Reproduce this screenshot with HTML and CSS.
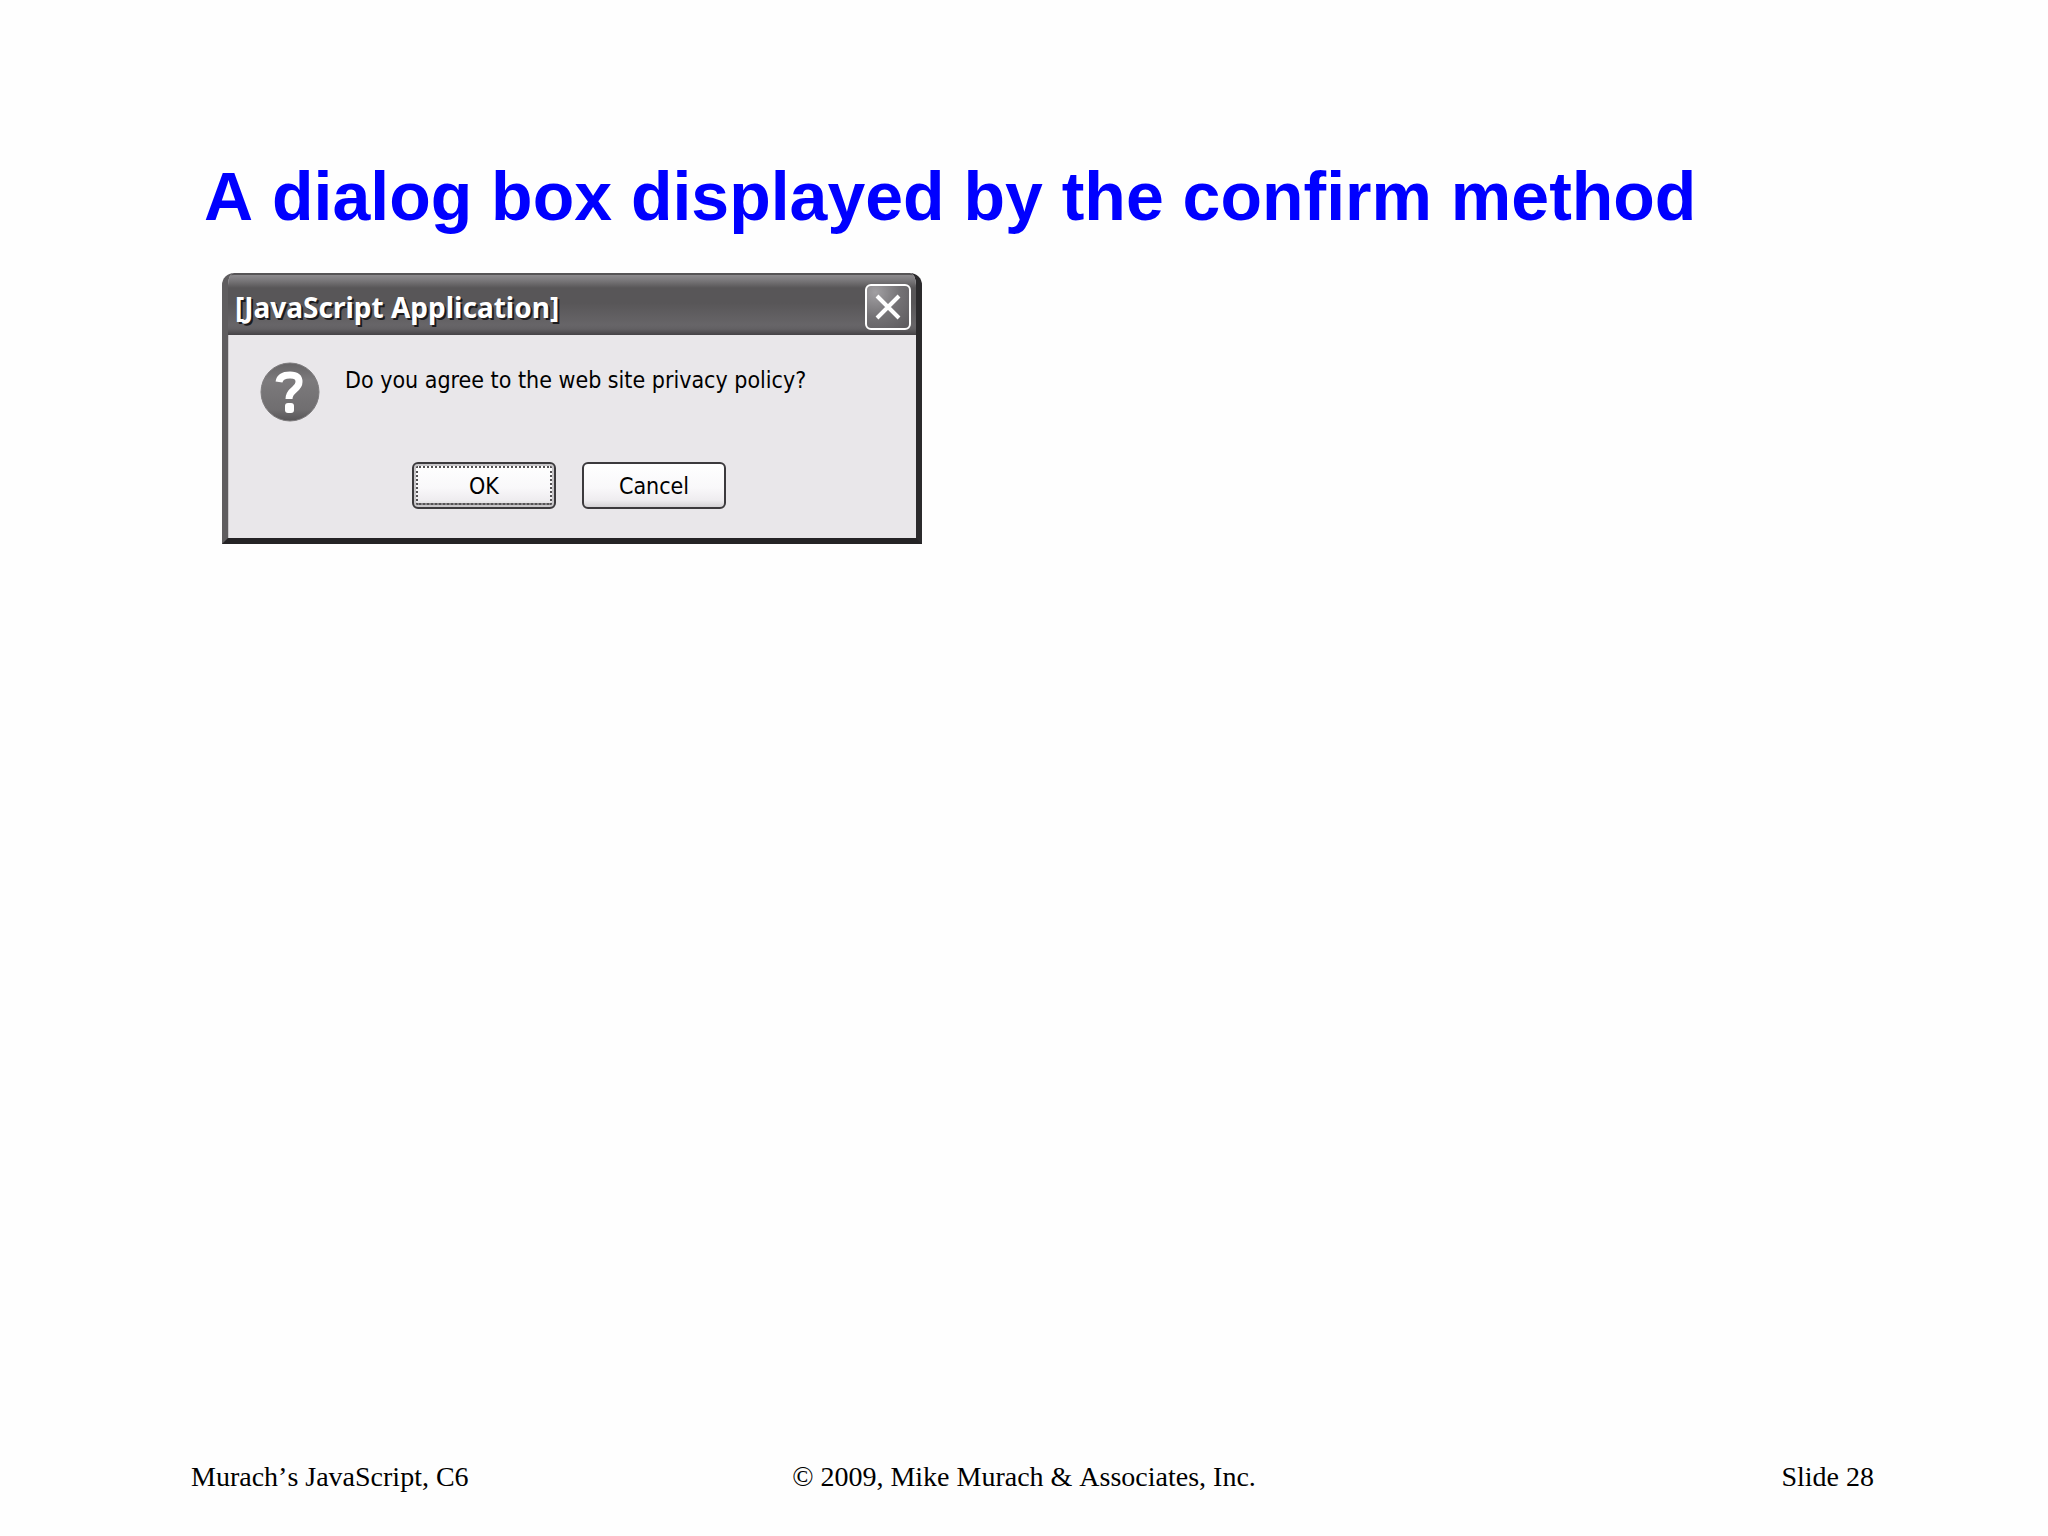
FILE: index.html
```html
<!DOCTYPE html>
<html lang="en">
<head>
<meta charset="utf-8">
<title>A dialog box displayed by the confirm method</title>
<link rel="stylesheet" href="styles.css">
</head>
<body>
<div class="slide">
  <main class="content">
    <h1 class="heading">A dialog box displayed by the confirm method</h1>
    <section class="dialog" role="dialog" aria-labelledby="dialog-title" aria-describedby="dialog-message">
      <header class="titlebar">
        <h2 class="dialog-title" id="dialog-title">[JavaScript Application]</h2>
        <button class="close" type="button" aria-label="Close">
          <svg class="close-icon" viewBox="0 0 26 26" aria-hidden="true"><path d="M2 2 24 24M24 2 2 24" fill="none" stroke="#fff" stroke-width="4"/></svg>
        </button>
      </header>
      <div class="dialog-body">
        <div class="prompt">
          <svg class="question" viewBox="0 0 60 60" aria-hidden="true">
            <defs>
              <linearGradient id="disc" x1="0" y1="0" x2="0" y2="1">
                <stop offset="0" stop-color="#666466"/>
                <stop offset=".3" stop-color="#7c7a7c"/>
                <stop offset=".8" stop-color="#706e70"/>
                <stop offset="1" stop-color="#575557"/>
              </linearGradient>
            </defs>
            <circle cx="30" cy="30" r="29" fill="url(#disc)" stroke="#7d7b7d" stroke-width="1"/>
            <path d="M19 20C20 14 25 13 30 13C37 13 39 16 39 20C39 28 29 27 29 37" fill="none" stroke="#fff" stroke-width="7"/>
            <rect x="25" y="41" width="9" height="10" rx="3" fill="#fff"/>
          </svg>
          <p class="message" id="dialog-message">Do you agree to the web site privacy policy?</p>
        </div>
        <div class="actions">
          <button class="btn btn-default" type="button">OK</button>
          <button class="btn" type="button">Cancel</button>
        </div>
      </div>
    </section>
  </main>
  <footer class="footer">
    <span class="footer-book">Murach’s JavaScript, C6</span>
    <span>© 2009, Mike Murach &amp; Associates, Inc.</span>
    <span class="footer-page">Slide 28</span>
  </footer>
</div>
</body>
</html>
```
FILE: styles.css
```css
* {
  box-sizing: border-box;
}

body {
  margin: 0;
  background: #fefefe;
  color: #000;
}

.slide {
  display: flex;
  flex-direction: column;
  min-height: 100vh;
}

.content {
  flex: 1;
  padding: 156px 204px 0;
}

.heading {
  margin: 0;
  font: bold 68px/80px "Liberation Sans", Arial, sans-serif;
  font-kerning: none;
  color: #00f;
}

.dialog {
  max-width: 700px;
  margin: 37px 0 0 18px;
  border: solid;
  border-width: 0 6px 6px;
  border-color: #555355 #2b2a2c #242325 #5f5d5f;
  border-radius: 12px 12px 0 0;
  background: #e9e7ea;
  overflow: hidden;
  box-shadow: inset 1px 0 #c9c7ca;
}

.titlebar {
  display: flex;
  align-items: center;
  justify-content: space-between;
  height: 62px;
  margin: 0 -6px;
  padding: 3px 11px 0 13px;
  border-top: 2px solid #565456;
  border-radius: 12px 12px 0 0;
  background: linear-gradient(#8d8b8e 0, #7b797c 5px, #585658 13px, #585658 28px, #676568 50px, #626063 54px, #454346 60px);
}

.dialog-title {
  margin: 0;
  font: bold 28px/32px "Noto Sans", "Open Sans", sans-serif;
  font-kerning: none;
  color: #fff;
  text-shadow: 2px 2px #1c1b1d;
}

.close {
  display: grid;
  place-items: center;
  width: 46px;
  height: 46px;
  padding: 0;
  border: 2px solid #fff;
  border-radius: 6px;
  background: radial-gradient(circle at 20% 15%, #a19fa2, #747275 50%, #5c5a5d);
}

.close-icon {
  width: 26px;
  height: 26px;
}

.dialog-body {
  padding: 27px 34px 29px 32px;
}

.prompt {
  display: flex;
  gap: 25px;
}

.question {
  width: 60px;
  height: 60px;
}

.message {
  margin: 2px 0 0;
  font: 23px/32px "DejaVu Sans Condensed", "DejaVu Sans", sans-serif;
}

.actions {
  display: flex;
  justify-content: center;
  gap: 26px;
  margin: 40px 4px 0 0;
}

.btn {
  width: 144px;
  height: 47px;
  padding: 0;
  border: 2px solid #3c3a3d;
  border-radius: 6px;
  background: linear-gradient(#fff, #f9f8fa 55%, #eeecef 85%, #d5d3d6);
  font: 23px/32px "DejaVu Sans Condensed", "DejaVu Sans", sans-serif;
  color: #000;
}

.btn-default {
  box-shadow: inset 0 0 0 2px #c9c7ca, inset 0 -4px #858386;
  outline: 2px dotted #555355;
  outline-offset: -6px;
}

.footer {
  display: grid;
  grid-template-columns: 1fr auto 1fr;
  padding: 0 174px 43px;
  font: 28px/32px "Liberation Serif", "Times New Roman", serif;
  font-kerning: none;
}

.footer-book {
  padding-left: 17px;
}

.footer-page {
  text-align: right;
}
```
